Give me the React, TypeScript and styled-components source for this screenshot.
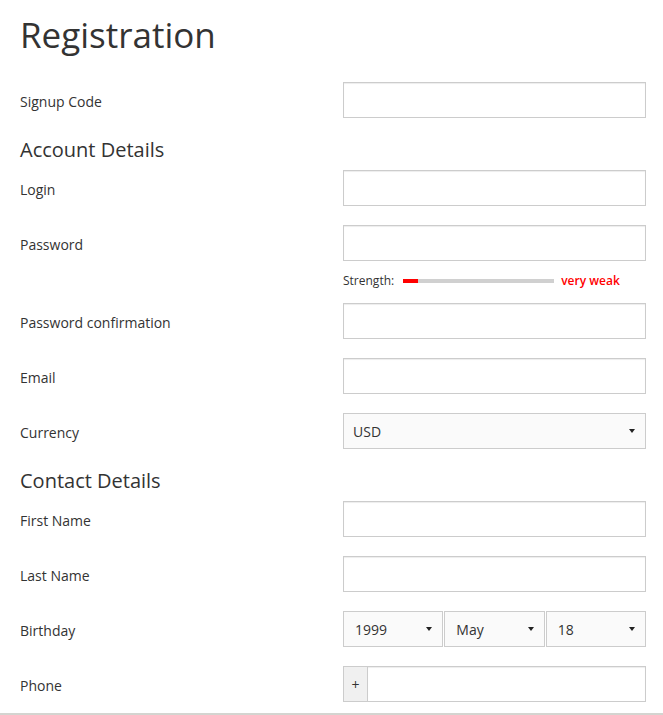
import styled, { createGlobalStyle } from "styled-components";

const GlobalStyle = createGlobalStyle`
  html, body {
    margin: 0;
    padding: 0;
    background: #fff;
  }
  body {
    font-family: "Open Sans", "Liberation Sans", sans-serif;
    color: #333;
  }
  * {
    box-sizing: border-box;
  }
`;

const Page = styled.div`
  width: 663px;
  height: 715px;
  overflow: hidden;
  display: flex;
  flex-direction: column;
`;

const Form = styled.form`
  padding: 10px 17px 0 20px;
  flex: 1;
`;

const Title = styled.h1`
  margin: 0 0 23px;
  font-size: 35px;
  font-weight: 400;
  line-height: 49px;
  color: #333;
`;

const SectionTitle = styled.h3`
  margin: 0 0 7px;
  font-size: 20px;
  font-weight: 400;
  line-height: 26px;
  color: #333;
`;

const Row = styled.div<{ $spacing?: number }>`
  display: grid;
  grid-template-columns: 323px 1fr;
  align-items: start;
  margin-bottom: ${({ $spacing }) => $spacing ?? 19}px;
`;

const Label = styled.label`
  height: 36px;
  padding-top: 2px;
  display: flex;
  align-items: center;
  font-size: 14px;
  color: #333;
`;

const Field = styled.div`
  display: flex;
  flex-direction: column;
`;

const TextInput = styled.input`
  width: 100%;
  height: 36px;
  border: 1px solid #ccc;
  border-radius: 0;
  box-shadow: inset 0 1px 1px rgba(0, 0, 0, 0.075);
  padding: 0 10px;
  font-family: inherit;
  font-size: 14px;
  color: #333;
  background: #fff;
  outline: none;
`;

const SelectWrap = styled.div`
  position: relative;
  flex: 1;
  &::after {
    content: "";
    position: absolute;
    right: 11px;
    top: 16px;
    border-top: 4px solid #222;
    border-left: 3px solid transparent;
    border-right: 3px solid transparent;
    pointer-events: none;
  }
`;

const Select = styled.select<{ $pad?: number }>`
  appearance: none;
  width: 100%;
  height: 36px;
  border: 1px solid #ccc;
  border-radius: 0;
  background: #fafafa;
  padding: 0 24px 0 ${({ $pad }) => $pad ?? 9}px;
  font-family: inherit;
  font-size: 14px;
  color: #333;
  outline: none;
`;

const SelectGroup = styled.div`
  display: flex;
  gap: 1px;
`;

const Strength = styled.div`
  display: flex;
  align-items: center;
  height: 18px;
  margin-top: 10px;
  font-size: 12px;
  color: #333;
`;

const Meter = styled.div`
  width: 151px;
  height: 4px;
  margin: 1px 7px 0 9px;
  background: #d0d0d0;
`;

const MeterFill = styled.div`
  height: 100%;
  background: #ff0000;
`;

const StrengthText = styled.span`
  color: #ff0000;
  font-weight: 600;
`;

const InputGroup = styled.div`
  display: flex;
`;

const Addon = styled.span`
  width: 26px;
  height: 36px;
  display: flex;
  align-items: center;
  justify-content: center;
  border: 1px solid #ccc;
  border-right: none;
  background: #f0f0f0;
  font-size: 14px;
  color: #333;
`;

const Footer = styled.div`
  height: 2px;
  background: #d4d4d0;
`;

const days = Array.from({ length: 31 }, (_, i) => String(i + 1));
const months = [
  "January", "February", "March", "April", "May", "June",
  "July", "August", "September", "October", "November", "December",
];
const years = Array.from({ length: 60 }, (_, i) => String(2010 - i));

export default function App() {
  const strength = 10;

  return (
    <>
      <GlobalStyle />
      <Page>
        <Form onSubmit={(e) => e.preventDefault()}>
          <Title>Registration</Title>

          <Row>
            <Label htmlFor="signup">Signup Code</Label>
            <TextInput id="signup" type="text" />
          </Row>

          <SectionTitle>Account Details</SectionTitle>
          <Row>
            <Label htmlFor="login">Login</Label>
            <TextInput id="login" type="text" />
          </Row>
          <Row $spacing={14}>
            <Label htmlFor="password">Password</Label>
            <Field>
              <TextInput id="password" type="password" />
              <Strength>
                Strength:
                <Meter>
                  <MeterFill style={{ width: `${strength}%` }} />
                </Meter>
                <StrengthText>very weak</StrengthText>
              </Strength>
            </Field>
          </Row>
          <Row>
            <Label htmlFor="password2">Password confirmation</Label>
            <TextInput id="password2" type="password" />
          </Row>
          <Row>
            <Label htmlFor="email">Email</Label>
            <TextInput id="email" type="email" />
          </Row>
          <Row>
            <Label htmlFor="currency">Currency</Label>
            <SelectWrap>
              <Select id="currency" defaultValue="USD">
                <option>USD</option>
                <option>EUR</option>
                <option>GBP</option>
              </Select>
            </SelectWrap>
          </Row>

          <SectionTitle>Contact Details</SectionTitle>
          <Row>
            <Label htmlFor="first">First Name</Label>
            <TextInput id="first" type="text" />
          </Row>
          <Row>
            <Label htmlFor="last">Last Name</Label>
            <TextInput id="last" type="text" />
          </Row>
          <Row>
            <Label>Birthday</Label>
            <SelectGroup>
              <SelectWrap>
                <Select $pad={11} defaultValue="1999">
                  {years.map((y) => (
                    <option key={y}>{y}</option>
                  ))}
                </Select>
              </SelectWrap>
              <SelectWrap>
                <Select $pad={11} defaultValue="May">
                  {months.map((m) => (
                    <option key={m}>{m}</option>
                  ))}
                </Select>
              </SelectWrap>
              <SelectWrap>
                <Select $pad={11} defaultValue="18">
                  {days.map((d) => (
                    <option key={d}>{d}</option>
                  ))}
                </Select>
              </SelectWrap>
            </SelectGroup>
          </Row>
          <Row $spacing={11}>
            <Label htmlFor="phone">Phone</Label>
            <InputGroup>
              <Addon>+</Addon>
              <TextInput id="phone" type="tel" />
            </InputGroup>
          </Row>
        </Form>
        <Footer />
      </Page>
    </>
  );
}
